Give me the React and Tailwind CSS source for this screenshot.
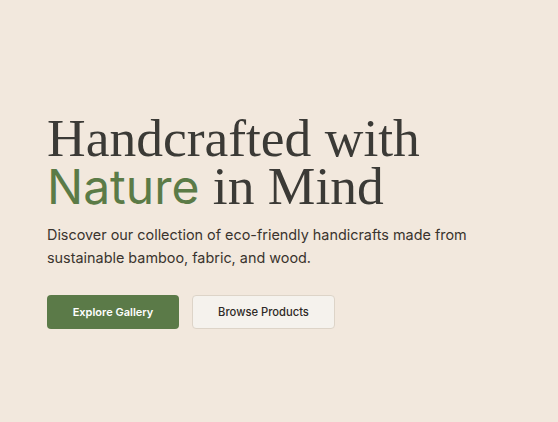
export default function App() {
  return (
    <div className="min-h-[422px] w-full bg-[#f2e8dd] px-[47px] pt-[114px]">
      <h1 className="text-[53.5px] leading-[48px] text-[#3b3a36] font-['Liberation_Serif',serif]">
        Handcrafted with
        <br />
        <span className="text-[48px] text-[#5b7b47] font-['Inter',sans-serif]">Nature</span> in Mind
      </h1>
      <p className="mt-[12px] max-w-[440px] text-[14.4px] leading-[23px] text-[#3a342e] font-['Inter',sans-serif]">
        Discover our collection of eco-friendly handicrafts made from sustainable bamboo, fabric, and wood.
      </p>
      <div className="mt-[26px] flex gap-[13px] font-['Inter',sans-serif]">
        <button className="h-[34px] w-[132px] rounded-[4px] bg-[#5b7a48] text-[11px] font-semibold text-white">
          Explore Gallery
        </button>
        <button className="h-[34px] w-[143px] rounded-[4px] border border-[#ddd4c8] bg-[#f5f2ed] text-[11.2px] font-medium text-[#2e2a26]">
          Browse Products
        </button>
      </div>
    </div>
  );
}
